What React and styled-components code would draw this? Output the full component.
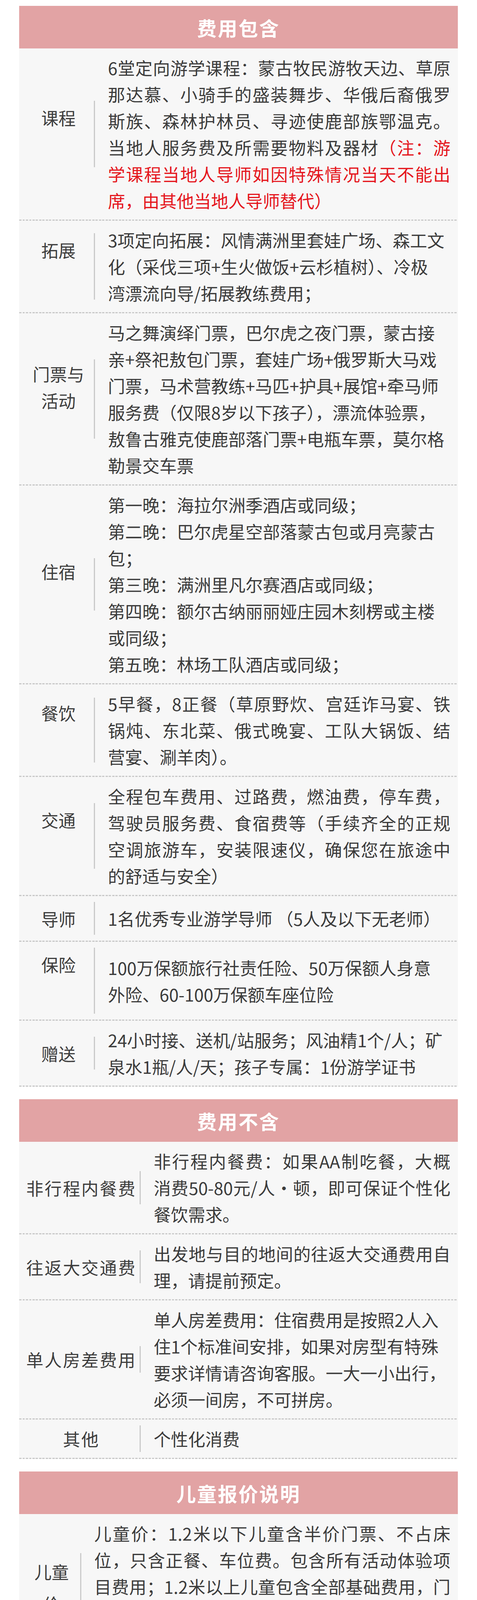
import styled, { createGlobalStyle } from 'styled-components';

const GlobalStyle = createGlobalStyle`
    html, body {
        margin: 0;
        padding: 0;
        background: #ececec;
    }
    body {
        font-family: 'Noto Sans CJK SC', 'Noto Sans', sans-serif;
        color: #3b3b3b;
    }
`;

//! table data, {} marks the red note text
const sections = [
    {
        title: '费用包含',
        labelWidth: 194,
        tracking: 0,
        rows: [
            {
                label: ['课程'],
                h: 170,
                fill: true,
                lines: [
                    '6堂定向游学课程：蒙古牧民游牧天边、草原',
                    '那达慕、小骑手的盛装舞步、华俄后裔俄罗',
                    '斯族、森林护林员、寻迹使鹿部族鄂温克。',
                    '当地人服务费及所需要物料及器材{（注：游}',
                    '{学课程当地人导师如因特殊情况当天不能出}',
                    '{席，由其他当地人导师替代）}',
                ],
            },
            {
                label: ['拓展'],
                h: 170,
                lines: ['3项定向拓展：风情满洲里套娃广场、森工文', '化（采伐三项+生火做饭+云杉植树）、冷极', '湾漂流向导/拓展教练费用；'],
            },
            {
                label: ['门票与', '活动'],
                h: 203,
                pad: 3,
                lines: [
                    '马之舞演绎门票，巴尔虎之夜门票，蒙古接',
                    '亲+祭祀敖包门票，套娃广场+俄罗斯大马戏',
                    '门票，马术营教练+马匹+护具+展馆+牵马师',
                    '服务费（仅限8岁以下孩子），漂流体验票，',
                    '敖鲁古雅克使鹿部落门票+电瓶车票，莫尔格',
                    '勒景交车票',
                ],
            },
            {
                label: ['住宿'],
                h: 134,
                pad: 0,
                lines: [
                    '第一晚：海拉尔洲季酒店或同级；',
                    '第二晚：巴尔虎星空部落蒙古包或月亮蒙古',
                    '包；',
                    '第三晚：满洲里凡尔赛酒店或同级；',
                    '第四晚：额尔古纳丽丽娅庄园木刻楞或主楼',
                    '或同级；',
                    '第五晚：林场工队酒店或同级；',
                ],
            },
            {
                label: ['餐饮'],
                h: 166,
                pad: 5,
                fill: true,
                lines: ['5早餐，8正餐（草原野炊、宫廷诈马宴、铁', '锅炖、东北菜、俄式晚宴、工队大锅饭、结', '营宴、涮羊肉）。'],
            },
            {
                label: ['交通'],
                h: 168,
                fill: true,
                lines: [
                    '全程包车费用、过路费，燃油费，停车费，',
                    '驾驶员服务费、食宿费等（手续齐全的正规',
                    '空调旅游车，安装限速仪，确保您在旅途中',
                    '的舒适与安全）',
                ],
            },
            { label: ['导师'], h: 84, lines: ['1名优秀专业游学导师 （5人及以下无老师）'] },
            { label: ['保险'], h: 169, lines: ['100万保额旅行社责任险、50万保额人身意', '外险、60-100万保额车座位险'] },
            { label: ['赠送'], h: 84, lines: ['24小时接、送机/站服务；风油精1个/人；矿', '泉水1瓶/人/天；孩子专属：1份游学证书'] },
        ],
    },
    {
        title: '费用不含',
        labelWidth: 311,
        tracking: 3,
        rows: [
            {
                label: ['非行程内餐费'],
                h: 85,
                fill: true,
                lines: ['非行程内餐费：如果AA制吃餐，大概', '消费50-80元/人·顿，即可保证个性化', '餐饮需求。'],
            },
            { label: ['往返大交通费'], h: 84, fill: true, lines: ['出发地与目的地间的往返大交通费用自', '理，请提前预定。'] },
            {
                label: ['单人房差费用'],
                h: 68,
                pad: 0,
                lines: ['单人房差费用：住宿费用是按照2人入', '住1个标准间安排，如果对房型有特殊', '要求详情请咨询客服。一大一小出行，', '必须一间房，不可拼房。'],
            },
            { label: ['其他'], h: 68, pad: 0, lines: ['个性化消费'] },
        ],
    },
    {
        title: '儿童报价说明',
        labelWidth: 159,
        tracking: 0,
        rows: [
            {
                label: ['儿童', '价'],
                h: 170,
                pad: 6,
                labelLh: 82,
                fill: true,
                lines: [
                    '儿童价：1.2米以下儿童含半价门票、不占床',
                    '位，只含正餐、车位费。包含所有活动体验项',
                    '目费用；1.2米以上儿童包含全部基础费用，门',
                    '票如有优惠差额现退（PS：1.2米以上儿童如果',
                    '以儿童价报名，酒店早餐费用需要额外付费）',
                ],
            },
        ],
    },
];

const renderLine = (text) =>
    text.split(/[{}]/).map((part, i) => (i % 2 === 1 ? <Note key={i}>{part}</Note> : part));

const App = () => {
    return (
        <>
            <GlobalStyle />
            <Page>
                {sections.map((section) => (
                    <Section key={section.title}>
                        <Banner>{section.title}</Banner>
                        {section.rows.map((row) => (
                            <Row key={row.label.join('')}>
                                <LabelCell
                                    $w={section.labelWidth}
                                    $h={row.h}
                                    $pad={row.pad ?? 9}
                                    $lh={row.labelLh ?? 68}
                                    $track={section.tracking}
                                >
                                    {row.label.map((l) => (
                                        <span key={l}>{l}</span>
                                    ))}
                                </LabelCell>
                                <Content>
                                    {row.lines.map((line, i) => (
                                        <Line key={i} $fill={row.fill && i < row.lines.length - 1}>
                                            {renderLine(line)}
                                        </Line>
                                    ))}
                                </Content>
                            </Row>
                        ))}
                    </Section>
                ))}
            </Page>
        </>
    );
};

const Page = styled.main`
    padding: 15px 49px 19px;
    background-color: #ffffff;
`;

const Section = styled.section`
    & + & {
        margin-top: 32px;
    }
`;

const Banner = styled.h2`
    margin: 0;
    height: 109px;
    display: flex;
    align-items: center;
    justify-content: center;
    background-color: #e2a3a4;
    color: #ffffff;
    font-size: 50px;
    line-height: 1;
    font-weight: 700;
    letter-spacing: 3px;
`;

const Row = styled.div`
    display: flex;
    align-items: center;
    padding: 15px 19px 18px 0;
    background-color: #f7f7f7;
    background-image: repeating-linear-gradient(90deg, #c9c9c9 0 5.5px, transparent 5.5px 8.5px);
    background-size: 100% 3px;
    background-repeat: no-repeat;
    background-position: left bottom;
`;

const LabelCell = styled.div`
    flex: 0 0 ${({ $w }) => $w}px;
    box-sizing: border-box;
    height: ${({ $h }) => $h}px;
    padding: ${({ $pad }) => $pad}px 0 0 10px;
    border-right: 3px solid #cacaca;
    display: flex;
    flex-direction: column;
    align-items: center;
    font-size: 44px;
    line-height: ${({ $lh }) => $lh}px;
    letter-spacing: ${({ $track }) => $track}px;
    color: #3d3d3d;
    white-space: nowrap;
`;

const Content = styled.div`
    flex: 1;
    min-width: 0;
    padding-left: 33px;
    font-size: 44px;
    line-height: 68px;
    color: #3b3b3b;
`;

const Line = styled.div`
    height: 68px;
    white-space: nowrap;
    text-align: ${({ $fill }) => ($fill ? 'justify' : 'left')};
    text-align-last: ${({ $fill }) => ($fill ? 'justify' : 'auto')};
`;

const Note = styled.span`
    color: #e5161d;
`;

export default App;
